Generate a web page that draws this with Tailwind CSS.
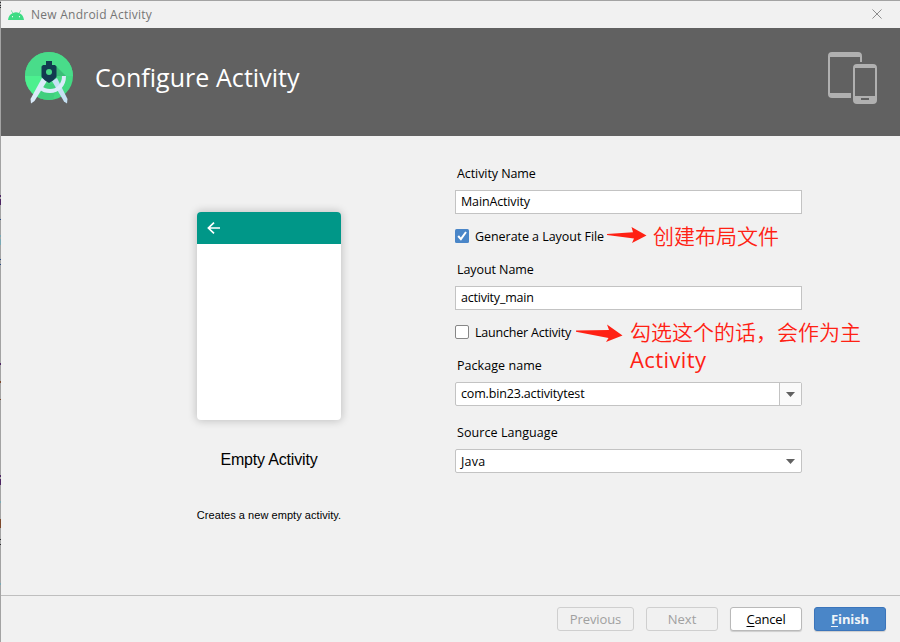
<!DOCTYPE html>
<html lang="zh-CN">
<head>
<meta charset="utf-8">
<title>New Android Activity</title>
<script src="https://cdn.jsdelivr.net/npm/@tailwindcss/browser@4"></script>
</head>
<body class="w-[900px] h-[642px] overflow-hidden bg-[#f1f1f1] text-black text-[13px] font-['Open_Sans','Noto_Sans','Noto_Sans_CJK_SC',sans-serif]">
<div class="relative flex flex-col w-[900px] h-[642px] border-l border-t border-[#a3a3a3]">
  <!-- Title bar -->
  <div class="flex items-center h-[27px] pl-[7px] pr-[18px] shrink-0">
    <svg class="w-4 h-[10px]" viewBox="0 0 16 10"><path d="M0 10C.3 6.700 2 4.300 4.500 3.200L3 .6l.5-.3L5 2.900a8 8 0 0 1 6 0L12.500.3l.5.3-1.500 2.600C14 4.300 15.700 6.700 16 10Z" fill="#3ddc84"/><circle cx="4.500" cy="6.700" r=".6" fill="#fff"/><circle cx="11.500" cy="6.700" r=".6" fill="#fff"/></svg>
    <span class="ml-[7px] text-[12px] leading-[26px] text-[#757575] tracking-[0.25px] whitespace-nowrap">New Android Activity</span>
    <svg class="ml-auto w-[10px] h-[10px] -mt-px" viewBox="0 0 11 11"><path d="M.5.5l10 10M10.500.5l-10 10" stroke="#8c8c8c" stroke-width="1.100"/></svg>
  </div>
  <!-- Header -->
  <header class="flex h-[108px] shrink-0 bg-[#616161] pl-6 pr-[22px] pt-6">
    <svg class="w-[48px] h-[52px]" viewBox="0 0 48 52">
      <defs><clipPath id="disc"><circle cx="24" cy="24" r="24"/></clipPath></defs>
      <g clip-path="url(#disc)"><rect width="48" height="48" fill="#43d982"/><path d="M0 24h48V0H0Z" fill="#49dc8a"/><path d="M0 24h20L8 48H0Z" fill="#4cf08f"/><path d="M31 14l10 10H31Z" fill="#3bbd78"/><path d="M20 32h12l-4 16H12Z" fill="#40cf7e"/></g>
      <path d="M27 29l5-3 10.500 21-.5 4.500-3-2Z" fill="#c6e1f4"/>
      <path d="M17 26l5 3L9.500 49l-3.500 2.500-.5-4.500Z" fill="#dbebfa"/>
      <path d="M39 24c0 9-6 15-14 15-4 0-7-1-9-3" fill="none" stroke="#dbebfa" stroke-width="4"/>
      <path d="M21 9h6v4h3l1.500 1.500V25L28 28.500 24 31l-4-2.500L16.500 25V14.500L18 13h3Z" fill="#123b50"/>
      <circle cx="24" cy="20" r="3" fill="#47d986"/>
    </svg>
    <h1 class="ml-[22px] mt-[7px] text-[25px] leading-[36px] font-normal text-white whitespace-nowrap tracking-[0.05px]">Configure Activity</h1>
    <svg class="ml-auto w-[50px] h-[53px]" viewBox="0 0 50 53" fill="#b0b0b0">
      <path fill-rule="evenodd" d="M4 0h26a4 4 0 0 1 4 4v6h-2V5H2v36h21v5H4a4 4 0 0 1-4-4V4a4 4 0 0 1 4-4Z"/>
      <path fill-rule="evenodd" d="M29 12h16a4 4 0 0 1 4 4v32a4 4 0 0 1-4 4H29a4 4 0 0 1-4-4V16a4 4 0 0 1 4-4ZM27 16v28h20V16ZM33 46v2h8v-2Z"/>
    </svg>
  </header>
  <!-- Content -->
  <main class="flex h-[460px] shrink-0 border-b border-[#bfbfbf]">
    <section class="flex flex-col items-center w-[144px] ml-[196px] pt-[76px] font-['Liberation_Sans',sans-serif]">
      <div class="w-[144px] h-[208px] rounded-[4px] bg-white overflow-hidden shadow-[0_0_8px_1px_rgba(0,0,0,0.2)]">
        <div class="flex items-center h-8 pl-[10px] bg-[#009788]">
          <svg class="w-[13px] h-[12px]" viewBox="0 0 13 12" fill="none" stroke="#fff" stroke-width="1.700"><path d="M13 6H1.500M7 .6L1.400 6 7 11.400"/></svg>
        </div>
      </div>
      <h2 class="mt-[29px] text-[16px] leading-[22px] whitespace-nowrap tracking-[-0.18px]">Empty Activity</h2>
      <p class="mt-[36px] text-[11px] leading-[16px] whitespace-nowrap tracking-[0.05px]">Creates a new empty activity.</p>
    </section>
    <form class="relative flex flex-col w-[347px] ml-[114px] pt-[26px] text-[12.5px]">
      <label class="h-6 pl-[2px] leading-6 tracking-[-0.08px]">Activity Name</label>
      <div class="mt-1 h-6 border border-[#c3c3c3] bg-white pl-[5px] leading-[22px] tracking-[-0.15px]">MainActivity</div>
      <div class="mt-[11px] h-[22px] flex items-center">
        <svg class="w-[14px] h-[14px] shrink-0" viewBox="0 0 14 14"><rect width="14" height="14" rx="1.500" fill="#4a86c8"/><path d="M3.200 7l2.700 3.200L11 3" fill="none" stroke="#fff" stroke-width="2"/></svg>
        <span class="ml-[6px] pt-[2px] leading-[24px] whitespace-nowrap tracking-[-0.05px]">Generate a Layout File</span>
      </div>
      <label class="mt-[11px] h-6 pl-[2px] leading-6 tracking-[-0.08px]">Layout Name</label>
      <div class="mt-1 h-6 border border-[#c3c3c3] bg-white pl-[5px] leading-[22px] tracking-[-0.22px]">activity_main</div>
      <div class="mt-[11px] h-[22px] flex items-center">
        <div class="w-[14px] h-[14px] shrink-0 rounded-[2px] border border-[#878787] bg-white"></div>
        <span class="ml-[6px] pt-[2px] leading-[24px] whitespace-nowrap tracking-[-0.2px]">Launcher Activity</span>
      </div>
      <label class="mt-[11px] h-6 pl-[2px] leading-6 tracking-[0.05px]">Package name</label>
      <div class="mt-1 h-6 flex border border-[#c3c3c3] rounded-[2px] bg-white pl-[5px] leading-[22px] tracking-[-0.16px]">
        <span class="flex-1">com.bin23.activitytest</span>
        <div class="w-[22px] border-l border-[#c3c3c3] bg-[#fafafa] flex items-center justify-center"><svg class="w-[9px] h-[5px]" viewBox="0 0 9 5"><path d="M0 0h9L4.500 5Z" fill="#616161"/></svg></div>
      </div>
      <label class="mt-[15px] h-6 pl-[2px] leading-6 tracking-[0.07px]">Source Language</label>
      <div class="mt-1 h-6 flex items-center border border-[#c3c3c3] rounded-[2px] bg-white pl-[5px] pr-[6px] leading-[22px]">
        <span class="flex-1 pt-[2px] tracking-[0.2px]">Java</span>
        <svg class="w-[9px] h-[5px]" viewBox="0 0 9 5"><path d="M0 0h9L4.500 5Z" fill="#616161"/></svg>
      </div>
      <!-- Red notes laid over the form -->
      <div class="absolute left-[152px] top-[85px] flex items-start text-[#ff2114] text-[21px] leading-[28px] whitespace-nowrap">
        <svg class="w-[40px] h-[16px] mr-[6px] mt-[6px]" viewBox="0 0 40 16" fill="#ff2114"><path d="M0 7L26 5.200 24.500 0 39.500 8.500 25 16 27 11.500 0 8Z"/></svg>
        <span class="font-['Noto_Sans_CJK_SC',sans-serif] font-[350]">创建布局文件</span>
      </div>
      <div class="absolute left-[121px] top-[181px] flex items-start text-[#ff2114] text-[21px] leading-[28px] whitespace-nowrap">
        <svg class="w-[47px] h-[18px] mr-[7px] mt-[7px]" viewBox="0 0 47 18" fill="#ff2114"><path d="M0 6.500L33 6 31 .5 46.500 11.500 30 18 32.500 14 0 7.800Z"/></svg>
        <span class="flex flex-col"><span class="font-['Noto_Sans_CJK_SC',sans-serif] font-[350]">勾选这个的话，会作为主</span><span class="text-[22px] tracking-[0.4px]">Activity</span></span>
      </div>
    </form>
  </main>
  <!-- Buttons -->
  <footer class="flex justify-end gap-3 pt-[11px] pr-[14px]">
    <button class="w-[77px] h-6 rounded-[3px] border border-[#cfcfcf] text-[#a0a0a0] leading-[22px] tracking-[-0.1px]">Previous</button>
    <button class="w-[72px] h-6 rounded-[3px] border border-[#cfcfcf] text-[#a0a0a0] leading-[22px]">Next</button>
    <button class="w-[72px] h-6 rounded-[3px] border border-[#b9b9b9] bg-white leading-[22px] shadow-[0_1px_1px_rgba(0,0,0,0.15)] tracking-[-0.2px]"><span class="underline underline-offset-2">C</span>ancel</button>
    <button class="w-[72px] h-6 rounded-[3px] border border-[#3b75bb] bg-[#4a86c8] text-[#f0f4f8] font-bold leading-[22px] shadow-[0_1px_1px_rgba(0,0,0,0.15)] tracking-[-0.1px]"><span class="underline underline-offset-2">F</span>inish</button>
  </footer>
  <!-- Slivers of the window behind, along the left edge -->
  <svg class="absolute -left-px -top-px w-px h-[642px]" viewBox="0 0 1 642" preserveAspectRatio="none" shape-rendering="crispEdges">
    <path d="M0 2h1v1H0zM0 5h1v1H0zM0 7h1v1H0zM0 539h1v1H0zM0 544h1v1H0z" fill="#2c2c30"/>
    <path d="M0 195h1v2H0zM0 199h1v6H0zM0 363h1v2H0zM0 475h1v2H0zM0 479h1v6H0z" fill="#4d2463"/>
    <path d="M0 219h1v1H0zM0 259h1v1H0zM0 264h1v1H0z" fill="#294c85"/>
    <path d="M0 235h1v2H0zM0 239h1v6H0zM0 501h1v2H0zM0 583h1v2H0z" fill="#78a9b5"/>
    <path d="M0 381h1v2H0zM0 399h1v1H0zM0 519h1v9H0z" fill="#7d492b"/>
  </svg>
</div>
</body>
</html>
